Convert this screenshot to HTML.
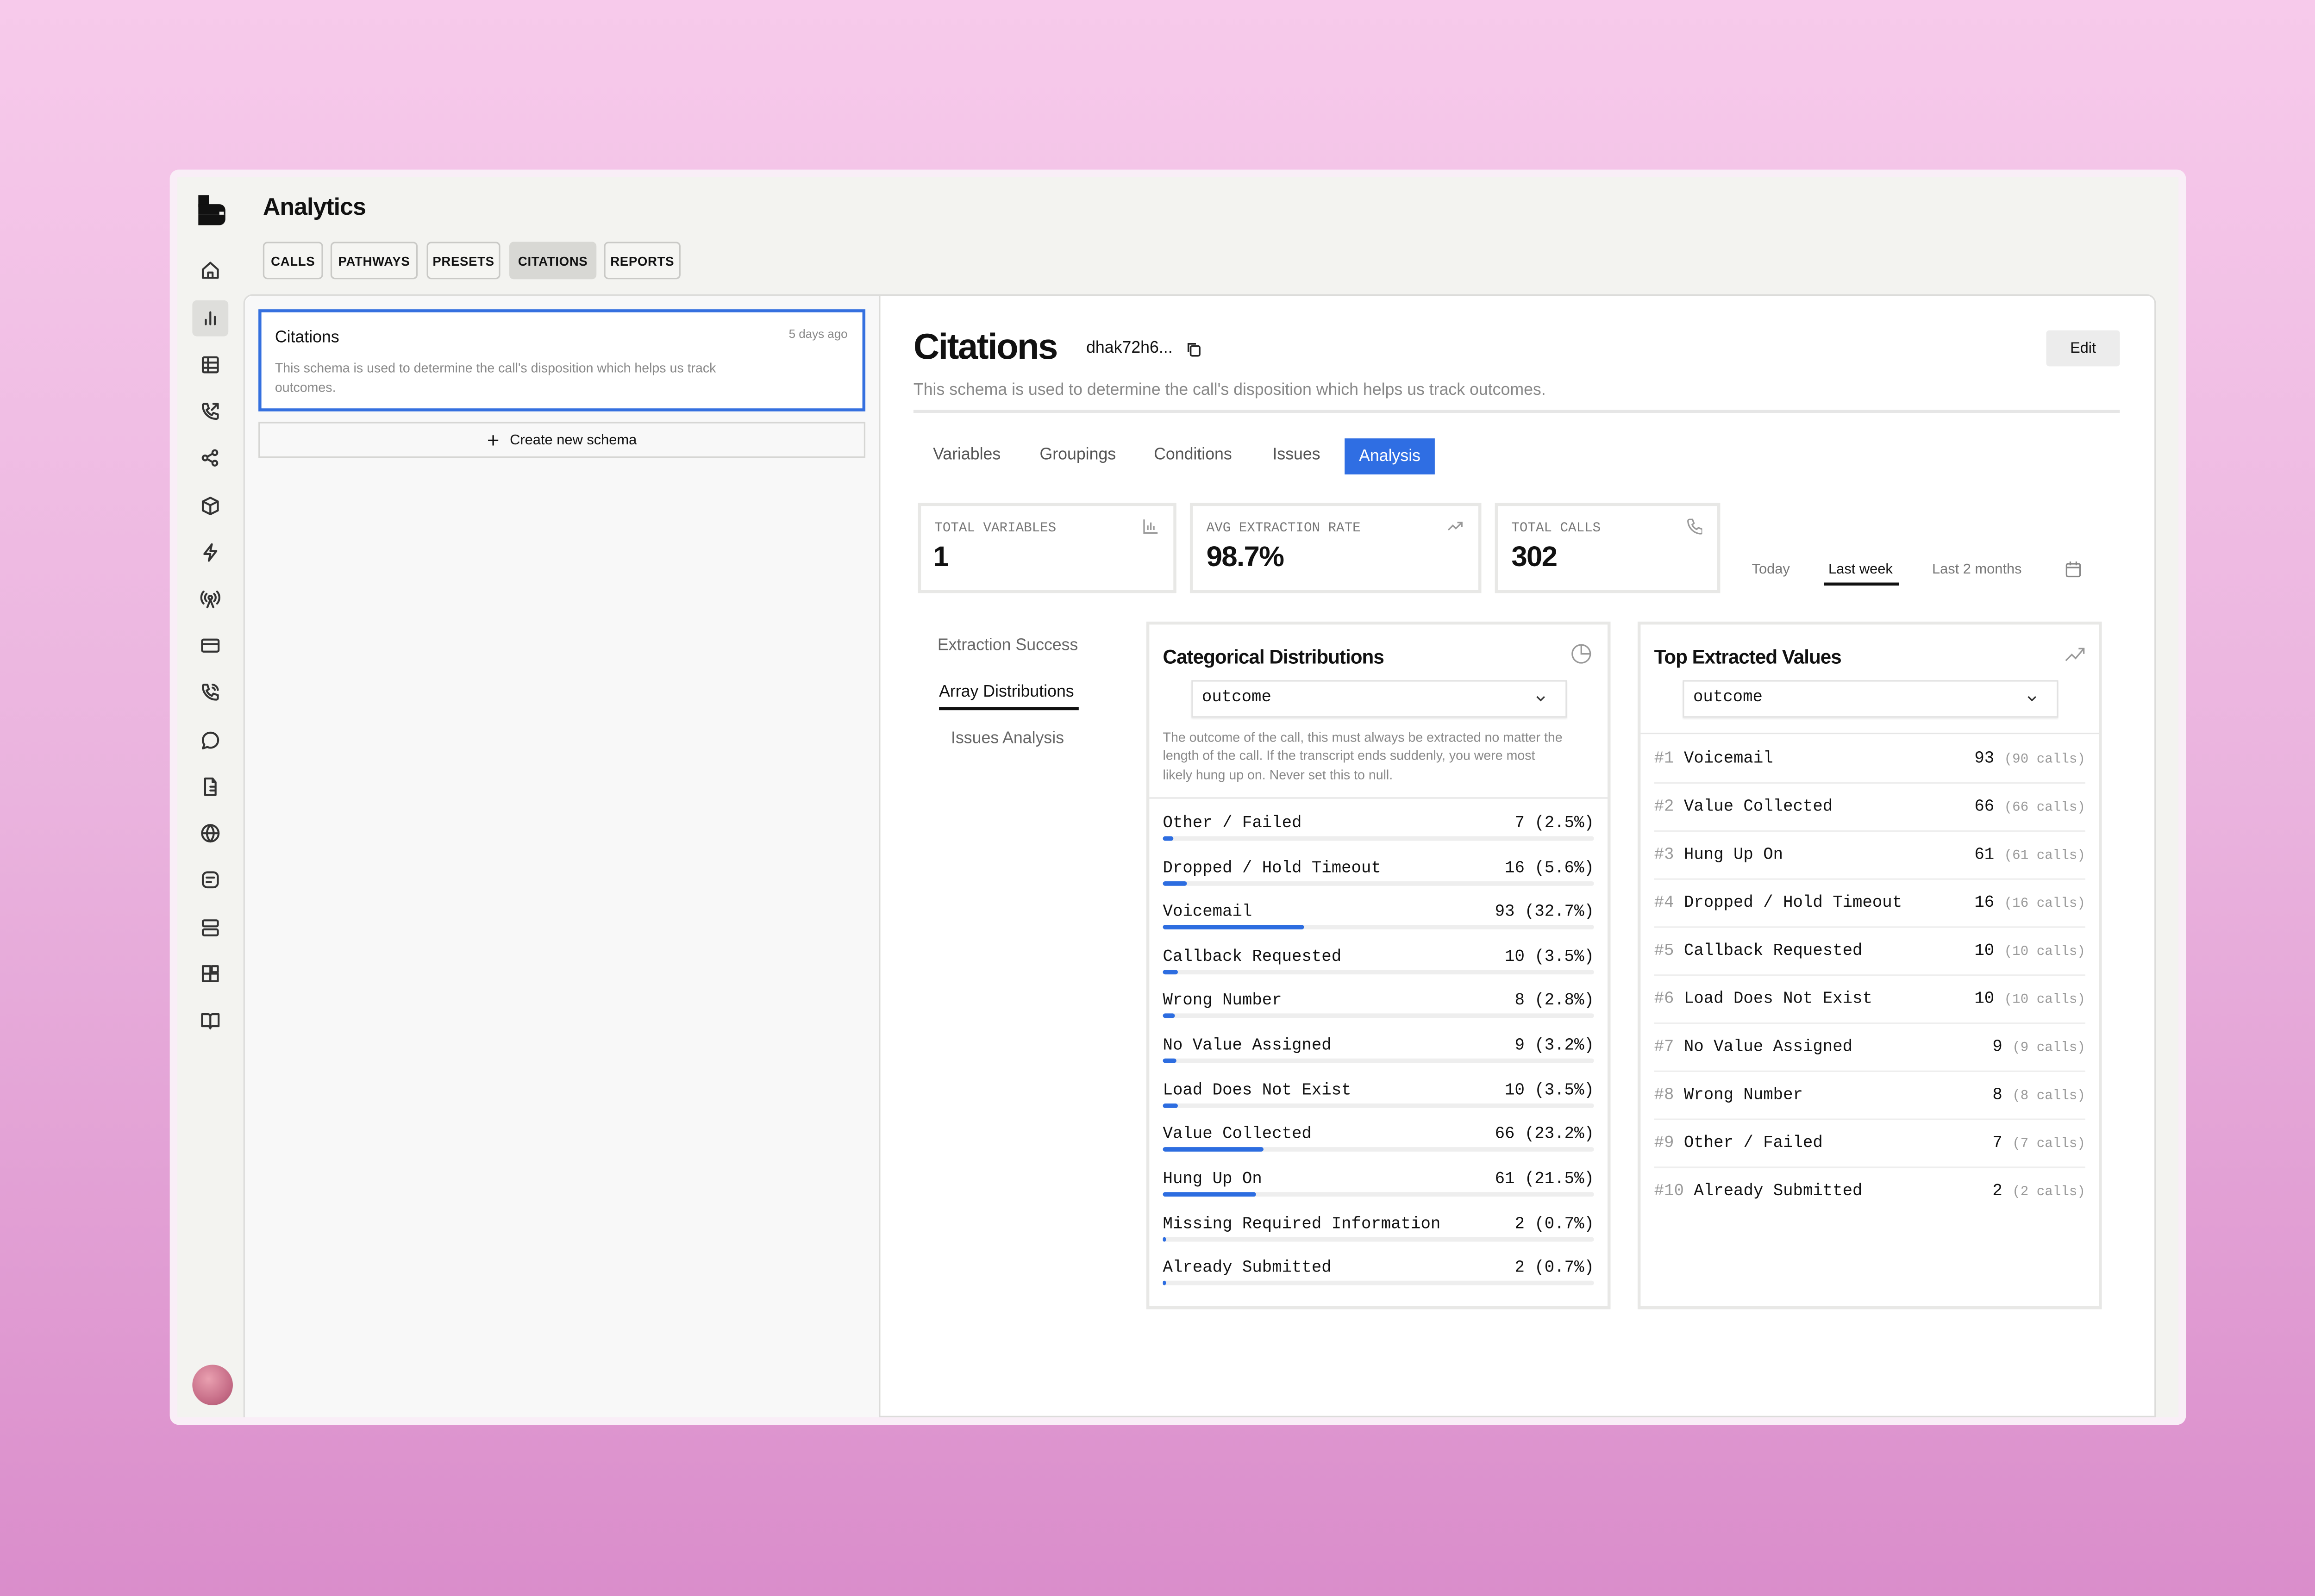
<!DOCTYPE html>
<html><head><meta charset="utf-8"><style>
*{box-sizing:border-box;margin:0;padding:0}
html,body{width:5088px;height:3448px;overflow:hidden}
body{background:linear-gradient(180deg,#f7caeb 0%,#eab3de 50%,#da8dcb 100%);font-family:"Liberation Sans",sans-serif;color:#111}
#s{position:absolute;left:0;top:0;width:1568px;height:1063px;transform:scale(3.2449,3.2436);transform-origin:0 0}
.a{position:absolute}
.mono{font-family:"Liberation Mono",monospace}
.win{left:113px;top:113px;width:1342px;height:836px;background:#f9eef7;border-radius:6px}
.inner{left:118px;top:118px;width:1332px;height:826px;background:#f3f3f0}
.ic{position:absolute;left:133px;width:14px;height:14px}
.ic svg{width:14px;height:14px;fill:none;stroke:#333;stroke-width:1.3;stroke-linecap:round;stroke-linejoin:round}
.tab{position:absolute;top:161px;height:25px;border:1px solid #c9c9c6;border-radius:3px;font-size:8.5px;font-weight:bold;letter-spacing:.2px;display:flex;align-items:center;justify-content:center;background:#f5f5f2}
.card{position:absolute;background:#fff;border:2px solid #e8e8e6}
.lbl{font-size:9px;color:#777}
.row{position:absolute;left:9px;width:287px;height:20px;font-size:11px}
.row .l{position:absolute;left:0;top:0}
.row .r{position:absolute;right:0;top:0}
.track{position:absolute;left:0;right:0;top:14px;height:3px;background:#eee;border-radius:2px}
.fill{position:absolute;left:0;top:0;height:3px;background:#2d6de0;border-radius:2px}
.tv{position:absolute;left:9px;width:287px;height:32px;border-bottom:1px solid #eee;font-size:11px}
.tv .l{position:absolute;left:0;top:10px}
.tv .r{position:absolute;right:0;top:10px}
.g{color:#999}
.sm{font-size:9px;color:#999}
</style></head><body><div id="s">
<div class="a win"></div>
<div class="a inner"></div>
<div class="a" style="left:132px;top:130px;width:7px;height:8px;background:#111"></div>
<div class="a" style="left:132px;top:136px;width:18px;height:7px;background:#111;border-radius:0 4px 0 0"></div>
<div class="a" style="left:132px;top:143px;width:18px;height:7px;background:#111;border-radius:0 0 4px 0"></div>
<div class="a" style="left:146px;top:141px;width:3px;height:2px;background:#f3f3f0"></div>
<div class="a" style="left:128px;top:200px;width:24px;height:24px;background:#dededb;border-radius:3px"></div>
<div class="ic" style="top:173px"><svg viewBox="0 0 14 14"><path d="M2 6.5L7 2l5 4.5V12H2z M5.5 12V8.5h3V12"/></svg></div>
<div class="ic" style="top:205px"><svg viewBox="0 0 14 14"><path d="M4 11V8M7 11V3M10 11V6"/></svg></div>
<div class="ic" style="top:236px"><svg viewBox="0 0 14 14"><rect x="2" y="2" width="10" height="10" rx="1"/><path d="M2 5.5h10M2 9h10M5.5 2v10"/></svg></div>
<div class="ic" style="top:267px"><svg viewBox="0 0 14 14"><path d="M3 2h2l1 3-1.5 1a7 7 0 003.5 3.5L9 8l3 1v2a1 1 0 01-1 1A9 9 0 012 3a1 1 0 011-1zM8 6l4-4M9 2h3v3"/></svg></div>
<div class="ic" style="top:298px"><svg viewBox="0 0 14 14"><circle cx="3.5" cy="7" r="1.6"/><circle cx="10" cy="3.5" r="1.6"/><circle cx="10" cy="10.5" r="1.6"/><path d="M5 6.2l3.5-2M5 7.8l3.5 2"/></svg></div>
<div class="ic" style="top:330px"><svg viewBox="0 0 14 14"><path d="M7 1.5l5 2.5v6l-5 2.5-5-2.5V4zM2 4l5 2.5L12 4M7 6.5v6"/></svg></div>
<div class="ic" style="top:361px"><svg viewBox="0 0 14 14"><path d="M8 1.5L3 8h4l-1 4.5L11 6H7z"/></svg></div>
<div class="ic" style="top:392px"><svg viewBox="0 0 14 14"><circle cx="7" cy="6" r="1.2"/><path d="M7 7.5L5 12.5M7 7.5l2 5M4.5 3.5a3.5 3.5 0 000 5M9.5 3.5a3.5 3.5 0 010 5M2.5 2a6 6 0 000 8M11.5 2a6 6 0 010 8"/></svg></div>
<div class="ic" style="top:423px"><svg viewBox="0 0 14 14"><rect x="1.5" y="3" width="11" height="8" rx="1"/><path d="M1.5 6h11"/></svg></div>
<div class="ic" style="top:454px"><svg viewBox="0 0 14 14"><path d="M3 2h2l1 3-1.5 1a7 7 0 003.5 3.5L9 8l3 1v2a1 1 0 01-1 1A9 9 0 012 3a1 1 0 011-1zM8.5 2a4 4 0 013.5 3.5M8.5 4a2 2 0 011.5 1.5"/></svg></div>
<div class="ic" style="top:486px"><svg viewBox="0 0 14 14"><path d="M7 2a5 5 0 00-4 8l-1 2.5 3-1A5 5 0 107 2z"/></svg></div>
<div class="ic" style="top:517px"><svg viewBox="0 0 14 14"><path d="M8.5 1.5H3.5v11h7V4zM8.5 1.5V4h2M7 7h3M7 9.5h3"/></svg></div>
<div class="ic" style="top:548px"><svg viewBox="0 0 14 14"><circle cx="7" cy="7" r="5.5"/><path d="M1.5 7h11M7 1.5c-3 3.5-3 7.5 0 11M7 1.5c3 3.5 3 7.5 0 11"/></svg></div>
<div class="ic" style="top:579px"><svg viewBox="0 0 14 14"><rect x="2" y="2" width="10" height="10" rx="3"/><path d="M4.5 5.5h5M4.5 8.5h3"/></svg></div>
<div class="ic" style="top:611px"><svg viewBox="0 0 14 14"><rect x="2" y="2" width="10" height="4" rx="1"/><rect x="2" y="8" width="10" height="4" rx="1"/></svg></div>
<div class="ic" style="top:642px"><svg viewBox="0 0 14 14"><rect x="2" y="6.5" width="5" height="5"/><rect x="7" y="6.5" width="5" height="5"/><rect x="2" y="1.5" width="5" height="5"/><rect x="8" y="1.5" width="4" height="4"/></svg></div>
<div class="ic" style="top:673px"><svg viewBox="0 0 14 14"><path d="M1.5 2.5h4A1.5 1.5 0 017 4v8a1.5 1.5 0 00-1.5-1.5h-4zM12.5 2.5h-4A1.5 1.5 0 007 4v8a1.5 1.5 0 011.5-1.5h4z"/></svg></div>
<div class="a" style="left:128px;top:909px;width:27px;height:27px;border-radius:50%;background:radial-gradient(circle at 40% 35%,#e9a0b0,#c76e88 60%,#a8506c)"></div>
<div class="a" style="left:175px;top:130px;font-size:16px;font-weight:bold;letter-spacing:-.3px">Analytics</div>
<div class="tab" style="left:175px;width:40px">CALLS</div>
<div class="tab" style="left:220px;width:58px">PATHWAYS</div>
<div class="tab" style="left:284px;width:49px">PRESETS</div>
<div class="tab" style="left:339px;width:58px;background:#d8d8d4;border-color:#d8d8d4">CITATIONS</div>
<div class="tab" style="left:402px;width:51px">REPORTS</div>
<div class="a" style="left:162px;top:196px;width:1273px;height:748px;background:#fff;border:1px solid #dcdcda;border-radius:6px 6px 0 0"></div>
<div class="a" style="left:163px;top:197px;width:423px;height:747px;background:#f8f8f8;border-right:1px solid #dcdcda;border-radius:6px 0 0 0"></div>
<div class="a" style="left:172px;top:206px;width:404px;height:68px;background:#fff;border:2px solid #3570df"></div>
<div class="a" style="left:183px;top:219px;font-size:11px">Citations</div>
<div class="a" style="left:525px;top:218px;font-size:8px;color:#888">5 days ago</div>
<div class="a" style="left:183px;top:239px;width:335px;font-size:8.8px;line-height:12.5px;color:#888">This schema is used to determine the call's disposition which helps us track outcomes.</div>
<div class="a" style="left:172px;top:281px;width:404px;height:24px;border:1px solid #d6d6d4;background:#f8f8f8;font-size:9.5px;display:flex;align-items:center;justify-content:center"><span style="font-size:14px;margin-right:7px;line-height:10px">+</span>Create new schema</div>
<div class="a" style="left:608px;top:218px;font-size:24px;font-weight:bold;letter-spacing:-.8px">Citations</div>
<div class="a" style="left:723px;top:226px;font-size:11px">dhak72h6...</div>
<svg class="a" style="left:789px;top:227px" width="11" height="11" viewBox="0 0 11 11" fill="none" stroke="#222" stroke-width="1.1"><rect x="3.5" y="3.5" width="6" height="6.5" rx="1"/><path d="M2 7.5V2h5"/></svg>
<div class="a" style="left:1362px;top:220px;width:49px;height:24px;background:#ececec;border-radius:2px;font-size:10px;display:flex;align-items:center;justify-content:center">Edit</div>
<div class="a" style="left:608px;top:254px;font-size:11px;color:#888">This schema is used to determine the call's disposition which helps us track outcomes.</div>
<div class="a" style="left:608px;top:273px;width:803px;height:2px;background:#e6e6e6"></div>
<div class="a" style="top:297px;left:621px;font-size:11px;color:#555">Variables</div>
<div class="a" style="top:297px;left:692px;font-size:11px;color:#555">Groupings</div>
<div class="a" style="top:297px;left:768px;font-size:11px;color:#555">Conditions</div>
<div class="a" style="top:297px;left:847px;font-size:11px;color:#555">Issues</div>
<div class="a" style="top:292px;left:895px;width:60px;height:24px;background:#2f6ee3;color:#fff;font-size:11px;display:flex;align-items:center;justify-content:center">Analysis</div>
<div class="card" style="left:611px;top:335px;width:172px;height:60px"></div>
<div class="card" style="left:792px;top:335px;width:194px;height:60px"></div>
<div class="card" style="left:995px;top:335px;width:150px;height:60px"></div>
<div class="a mono lbl" style="left:622px;top:347px">TOTAL VARIABLES</div>
<div class="a mono lbl" style="left:803px;top:347px">AVG EXTRACTION RATE</div>
<div class="a mono lbl" style="left:1006px;top:347px">TOTAL CALLS</div>
<svg class="a" style="left:760px;top:345px" width="11" height="11" viewBox="0 0 11 11" fill="none" stroke="#999" stroke-width="1"><path d="M1.5 1v9h9M4 8V5M6 8V3M8 8V5.5"/></svg>
<svg class="a" style="left:963px;top:345px" width="11" height="11" viewBox="0 0 11 11" fill="none" stroke="#999" stroke-width="1"><path d="M1 8l3-3 2 2 4-4M7 3h3v3"/></svg>
<svg class="a" style="left:1122px;top:345px" width="11" height="11" viewBox="0 0 11 11" fill="none" stroke="#999" stroke-width="1"><path d="M2.5 1h2l1 2.5-1.2 1a6 6 0 003 3L8.5 6.5 11 7.5v2a1 1 0 01-1 1A9 9 0 011.5 2a1 1 0 011-1z"/></svg>
<div class="a" style="left:621px;top:361px;font-size:19px;font-weight:bold">1</div>
<div class="a" style="left:803px;top:361px;font-size:19px;font-weight:bold;letter-spacing:-.5px">98.7%</div>
<div class="a" style="left:1006px;top:361px;font-size:19px;font-weight:bold;letter-spacing:-.5px">302</div>
<div class="a" style="left:1166px;top:374px;font-size:9.5px;color:#777">Today</div>
<div class="a" style="left:1217px;top:374px;font-size:9.5px;color:#111">Last week</div>
<div class="a" style="left:1214px;top:388px;width:50px;height:2px;background:#111"></div>
<div class="a" style="left:1286px;top:374px;font-size:9.5px;color:#777">Last 2 months</div>
<svg class="a" style="left:1374px;top:373px" width="12" height="12" viewBox="0 0 12 12" fill="none" stroke="#888" stroke-width="1"><rect x="1.5" y="2.5" width="9" height="8.5" rx="1"/><path d="M1.5 5h9M4 1v2.5M8 1v2.5"/></svg>
<div class="a" style="left:624px;top:424px;font-size:11px;color:#666">Extraction Success</div>
<div class="a" style="left:625px;top:455px;font-size:11px;color:#111">Array Distributions</div>
<div class="a" style="left:625px;top:471px;width:93px;height:2px;background:#111"></div>
<div class="a" style="left:633px;top:486px;font-size:11px;color:#666">Issues Analysis</div>

<div class="card" style="left:763px;top:414px;width:309px;height:458px">
 <div class="a" style="left:9px;top:14px;font-size:13px;font-weight:bold;letter-spacing:-.3px">Categorical Distributions</div>
 <svg class="a" style="left:280px;top:12px" width="15" height="15" viewBox="0 0 15 15" fill="none" stroke="#999" stroke-width="1"><circle cx="7.5" cy="7.5" r="6"/><path d="M7.5 1.5v6h6"/></svg>
 <div class="a" style="left:28px;top:37px;width:250px;height:25px;border:1px solid #e2e2e2;box-shadow:0 1px 1px #eee"></div>
 <div class="a mono" style="left:35px;top:43px;font-size:11px">outcome</div>
 <svg class="a" style="left:256px;top:45px" width="9" height="9" viewBox="0 0 9 9" fill="none" stroke="#333" stroke-width="1"><path d="M2 3l2.5 2.5L7 3"/></svg>
 <div class="a" style="left:9px;top:69px;width:266px;font-size:8.8px;line-height:12.3px;color:#888">The outcome of the call, this must always be extracted no matter the length of the call. If the transcript ends suddenly, you were most likely hung up on. Never set this to null.</div>
 <div class="a" style="left:0;right:0;top:115px;height:1px;background:#e6e6e6"></div>
 <div class="row mono" style="top:127px"><span class="l">Other / Failed</span><span class="r">7 (2.5%)</span><div class="track"><div class="fill" style="width:2.5%"></div></div></div>
 <div class="row mono" style="top:157px"><span class="l">Dropped / Hold Timeout</span><span class="r">16 (5.6%)</span><div class="track"><div class="fill" style="width:5.6%"></div></div></div>
 <div class="row mono" style="top:186px"><span class="l">Voicemail</span><span class="r">93 (32.7%)</span><div class="track"><div class="fill" style="width:32.7%"></div></div></div>
 <div class="row mono" style="top:216px"><span class="l">Callback Requested</span><span class="r">10 (3.5%)</span><div class="track"><div class="fill" style="width:3.5%"></div></div></div>
 <div class="row mono" style="top:245px"><span class="l">Wrong Number</span><span class="r">8 (2.8%)</span><div class="track"><div class="fill" style="width:2.8%"></div></div></div>
 <div class="row mono" style="top:275px"><span class="l">No Value Assigned</span><span class="r">9 (3.2%)</span><div class="track"><div class="fill" style="width:3.2%"></div></div></div>
 <div class="row mono" style="top:305px"><span class="l">Load Does Not Exist</span><span class="r">10 (3.5%)</span><div class="track"><div class="fill" style="width:3.5%"></div></div></div>
 <div class="row mono" style="top:334px"><span class="l">Value Collected</span><span class="r">66 (23.2%)</span><div class="track"><div class="fill" style="width:23.2%"></div></div></div>
 <div class="row mono" style="top:364px"><span class="l">Hung Up On</span><span class="r">61 (21.5%)</span><div class="track"><div class="fill" style="width:21.5%"></div></div></div>
 <div class="row mono" style="top:394px"><span class="l">Missing Required Information</span><span class="r">2 (0.7%)</span><div class="track"><div class="fill" style="width:0.7%"></div></div></div>
 <div class="row mono" style="top:423px"><span class="l">Already Submitted</span><span class="r">2 (0.7%)</span><div class="track"><div class="fill" style="width:0.7%"></div></div></div>
</div>

<div class="card" style="left:1090px;top:414px;width:309px;height:458px">
 <div class="a" style="left:9px;top:14px;font-size:13px;font-weight:bold;letter-spacing:-.3px">Top Extracted Values</div>
 <svg class="a" style="left:282px;top:14px" width="14" height="12" viewBox="0 0 14 12" fill="none" stroke="#999" stroke-width="1"><path d="M1 10l4-4 2.5 2.5L13 2M9.5 2H13v3.5"/></svg>
 <div class="a" style="left:28px;top:37px;width:250px;height:25px;border:1px solid #e2e2e2;box-shadow:0 1px 1px #eee"></div>
 <div class="a mono" style="left:35px;top:43px;font-size:11px">outcome</div>
 <svg class="a" style="left:256px;top:45px" width="9" height="9" viewBox="0 0 9 9" fill="none" stroke="#333" stroke-width="1"><path d="M2 3l2.5 2.5L7 3"/></svg>
 <div class="a" style="left:0;right:0;top:72px;height:1px;background:#e6e6e6"></div>
 <div class="tv mono" style="top:74px"><span class="l"><span class="g">#1</span> Voicemail</span><span class="r">93 <span class="sm">(90 calls)</span></span></div>
 <div class="tv mono" style="top:106px"><span class="l"><span class="g">#2</span> Value Collected</span><span class="r">66 <span class="sm">(66 calls)</span></span></div>
 <div class="tv mono" style="top:138px"><span class="l"><span class="g">#3</span> Hung Up On</span><span class="r">61 <span class="sm">(61 calls)</span></span></div>
 <div class="tv mono" style="top:170px"><span class="l"><span class="g">#4</span> Dropped / Hold Timeout</span><span class="r">16 <span class="sm">(16 calls)</span></span></div>
 <div class="tv mono" style="top:202px"><span class="l"><span class="g">#5</span> Callback Requested</span><span class="r">10 <span class="sm">(10 calls)</span></span></div>
 <div class="tv mono" style="top:234px"><span class="l"><span class="g">#6</span> Load Does Not Exist</span><span class="r">10 <span class="sm">(10 calls)</span></span></div>
 <div class="tv mono" style="top:266px"><span class="l"><span class="g">#7</span> No Value Assigned</span><span class="r">9 <span class="sm">(9 calls)</span></span></div>
 <div class="tv mono" style="top:298px"><span class="l"><span class="g">#8</span> Wrong Number</span><span class="r">8 <span class="sm">(8 calls)</span></span></div>
 <div class="tv mono" style="top:330px"><span class="l"><span class="g">#9</span> Other / Failed</span><span class="r">7 <span class="sm">(7 calls)</span></span></div>
 <div class="tv mono" style="top:362px;border-bottom:none"><span class="l"><span class="g">#10</span> Already Submitted</span><span class="r">2 <span class="sm">(2 calls)</span></span></div>
</div>
</div></body></html>
